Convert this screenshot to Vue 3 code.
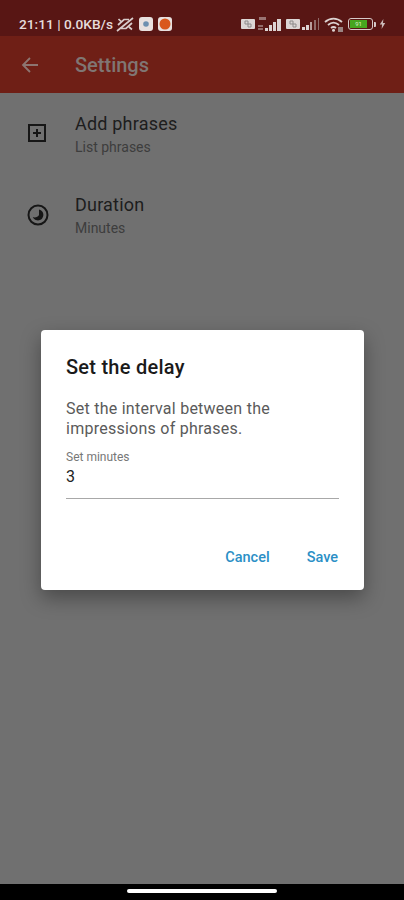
<script setup>
const rows = [
  { title: 'Add phrases', sub: 'List phrases', icon: 'add' },
  { title: 'Duration', sub: 'Minutes', icon: 'time' }
]
</script>

<template>
  <div class="screen">
    <header class="status">
      <span class="clock">21:11 | 0.0KB/s</span>
      <svg class="sync" width="18" height="15" viewBox="0 0 18 15" fill="none" stroke="#d8cccb" stroke-width="1.700">
        <path d="M2 8 L8 2.500 H13 M5 11.500 H10 L16 6 M5 4.500 L2.500 2 M13 10 L16 12.500 M1 14 L17 1" />
      </svg>
      <span class="app-badge">
        <svg viewBox="0 0 14 14"><circle cx="7" cy="7" r="2.800" fill="#6d8fb0" /></svg>
      </span>
      <span class="app-badge second">
        <svg viewBox="0 0 14 14"><circle cx="7" cy="7" r="5.500" fill="#d9581c" /></svg>
      </span>
      <span class="status-right">
        <span class="sim">
          <svg width="14" height="10" viewBox="0 0 14 10" fill="none" stroke="#8d8a8a" stroke-width="1"><path d="M4 2 H7 V5 H4 Z M7 5 H10 V8 H7 Z" /></svg>
        </span>
        <svg class="signal" width="26" height="15" viewBox="0 0 26 15" fill="#dcd2d1">
          <rect x="1" y="0" width="7" height="3" opacity=".5" />
          <rect x="0" y="8" width="5" height="2" opacity=".45" />
          <rect x="0" y="11" width="5" height="2" opacity=".45" />
          <rect x="7" y="11" width="3" height="3" />
          <rect x="11" y="8" width="3" height="6" />
          <rect x="15" y="5" width="3" height="9" />
          <rect x="19" y="2" width="4" height="12" />
        </svg>
        <span class="sim next">
          <svg width="14" height="10" viewBox="0 0 14 10" fill="none" stroke="#8d8a8a" stroke-width="1"><path d="M4 2 H7 V5 H4 Z M7 5 H10 V8 H7 Z" /></svg>
        </span>
        <svg class="signal-two" width="18" height="12" viewBox="0 0 18 12">
          <rect x="0" y="9" width="3" height="3" fill="#dcd2d1" />
          <rect x="4" y="7" width="3" height="5" fill="#dcd2d1" />
          <rect x="8" y="4" width="2" height="8" fill="#b99d9b" />
          <rect x="12" y="2" width="2" height="10" fill="#8f6a68" />
          <rect x="16" y="0" width="1" height="12" fill="#8f6a68" />
        </svg>
        <svg class="wifi" width="19" height="15" viewBox="0 0 19 15" fill="none" stroke="#dcd2d1" stroke-width="1.800">
          <path d="M1 5 C6 0.500 13 0.500 18 5 M4 8 C7.500 5 11.500 5 15 8 M7 11 C8.500 9.800 10.500 9.800 12 11" />
          <circle cx="9.500" cy="13.300" r="1.500" fill="#dcd2d1" stroke="none" />
          <rect x="14" y="10" width="5" height="5" fill="#9a8482" stroke="none" />
        </svg>
        <span class="battery"><span class="level">91</span></span>
        <span class="nub"></span>
        <svg class="bolt" width="7" height="10" viewBox="0 0 7 11" fill="#cbbab9"><path d="M4.500 0 L0.500 6 H3 L2.500 11 L6.500 4.500 H4 Z" /></svg>
      </span>
    </header>

    <div class="appbar">
      <svg class="back" width="20" height="20" viewBox="0 0 20 20" fill="none" stroke="#8d7571" stroke-width="1.800">
        <path d="M18 10 H3 M10 3 L3 10 L10 17" />
      </svg>
      <h1>Settings</h1>
    </div>

    <main class="content">
      <section v-for="row in rows" :key="row.title" class="row">
        <span class="row-icon">
          <svg v-if="row.icon === 'add'" width="22" height="22" viewBox="0 0 22 22" fill="none" stroke="#161616" stroke-width="2">
            <rect x="3" y="3" width="16" height="16" />
            <path d="M11 7 V15 M7 11 H15" />
          </svg>
          <svg v-else width="24" height="24" viewBox="0 0 24 24" fill="none">
            <circle cx="12" cy="12" r="9.500" stroke="#161616" stroke-width="2" />
            <path d="M13 6.500 A5.500 5.500 0 1 1 6.800 14 C9 15 12 14 13 12 Z" fill="#161616" />
          </svg>
        </span>
        <div class="row-text">
          <div class="row-title">{{ row.title }}</div>
          <div class="row-sub">{{ row.sub }}</div>
        </div>
      </section>
    </main>

    <footer class="navbar"><span class="handle"></span></footer>

    <div class="dialog">
      <h2>Set the delay</h2>
      <p>Set the interval between the impressions of phrases.</p>
      <label class="field">
        <span class="field-label">Set minutes</span>
        <span class="field-value">3</span>
      </label>
      <div class="actions">
        <button type="button">Cancel</button>
        <button type="button">Save</button>
      </div>
    </div>
  </div>
</template>

<style scoped>
.screen {
  position: relative;
  width: 404px;
  height: 900px;
  display: flex;
  flex-direction: column;
  overflow: hidden;
  background: #707070;
  font-family: Roboto, "Liberation Sans", sans-serif;
}
.status {
  height: 36px;
  flex: none;
  display: flex;
  align-items: center;
  padding: 12px 18px 0 19px;
  background: #581614;
  color: #e6dcdb;
  box-sizing: border-box;
}
.clock {
  font-size: 13.700px;
  font-weight: 500;
  white-space: nowrap;
}
.sync {
  margin-left: 3px;
}
.app-badge {
  width: 14px;
  height: 14px;
  margin-left: 5px;
  border-radius: 3px;
  background: #e8e0df;
  display: flex;
}
.app-badge.second {
  margin-left: 5px;
}
.app-badge svg {
  width: 14px;
  height: 14px;
}
.status-right {
  margin-left: auto;
  display: flex;
  align-items: center;
}
.sim {
  width: 14px;
  height: 10px;
  background: #dcd6d5;
  border-radius: 1px;
  display: flex;
}
.signal {
  margin-left: 3px;
}
.sim.next {
  margin-left: 2px;
}
.signal-two {
  margin-left: 2px;
}
.wifi {
  margin-left: 4px;
}
.battery {
  width: 21px;
  height: 8px;
  margin-left: 5px;
  padding: 1px;
  border: 1.500px solid #d6cac9;
  border-radius: 3px;
  box-sizing: content-box;
}
.level {
  display: block;
  width: 17px;
  height: 8px;
  background: #47a51e;
  color: #d9efc9;
  font-size: 6px;
  line-height: 8px;
  text-align: center;
}
.nub {
  width: 2px;
  height: 5px;
  margin-left: 1px;
  background: #d6cac9;
  border-radius: 0 1px 1px 0;
}
.bolt {
  margin-left: 3px;
}
.appbar {
  height: 57px;
  flex: none;
  display: flex;
  align-items: center;
  padding-left: 20px;
  background: #6f1f16;
  box-sizing: border-box;
}
.back {
  flex: none;
}
h1 {
  margin: 0 0 0 35px;
  font-size: 20px;
  font-weight: 500;
  color: #807673;
}
.content {
  flex: 1;
  padding-top: 19px;
}
.row {
  height: 81px;
  display: flex;
  align-items: flex-start;
}
.row-icon {
  width: 75px;
  flex: none;
  padding-top: 10px;
  padding-left: 26px;
  box-sizing: border-box;
}
.row-title {
  font-size: 18px;
  line-height: 24px;
  letter-spacing: 0.200px;
  color: #1d1d1d;
}
.row-sub {
  margin-top: 2px;
  font-size: 14px;
  line-height: 18px;
  color: #3d3d3d;
}
.navbar {
  height: 16px;
  flex: none;
  background: #000;
  display: flex;
  justify-content: center;
  padding-top: 5px;
  box-sizing: border-box;
}
.handle {
  width: 150px;
  height: 4px;
  border-radius: 2px;
  background: #fff;
}
.dialog {
  position: absolute;
  left: 41px;
  top: 330px;
  width: 323px;
  height: 260px;
  padding: 24px 25px 0;
  box-sizing: border-box;
  display: flex;
  flex-direction: column;
  background: #fff;
  border-radius: 4px;
  box-shadow: 0 8px 20px rgba(0, 0, 0, .35);
}
h2 {
  margin: 0;
  font-size: 20px;
  line-height: 26px;
  font-weight: 500;
  letter-spacing: 0.250px;
  color: #1a1a1a;
}
p {
  margin: 19px 0 0;
  font-size: 16px;
  line-height: 19.500px;
  letter-spacing: 0.250px;
  color: #5a5a5a;
}
.field {
  margin-top: 12px;
  display: flex;
  flex-direction: column;
  height: 48px;
  border-bottom: 1px solid #a8a8a8;
}
.field-label {
  font-size: 12px;
  line-height: 14px;
  color: #777;
}
.field-value {
  margin-top: 3px;
  font-size: 16px;
  line-height: 20px;
  color: #222;
}
.actions {
  margin-top: 50px;
  display: flex;
  justify-content: flex-end;
  gap: 36px;
}
button {
  padding: 0;
  border: 0;
  background: none;
  font-family: inherit;
  font-size: 14.500px;
  line-height: 18px;
  font-weight: 500;
  color: #2b8fc6;
  margin-right: 1px;
}
</style>
